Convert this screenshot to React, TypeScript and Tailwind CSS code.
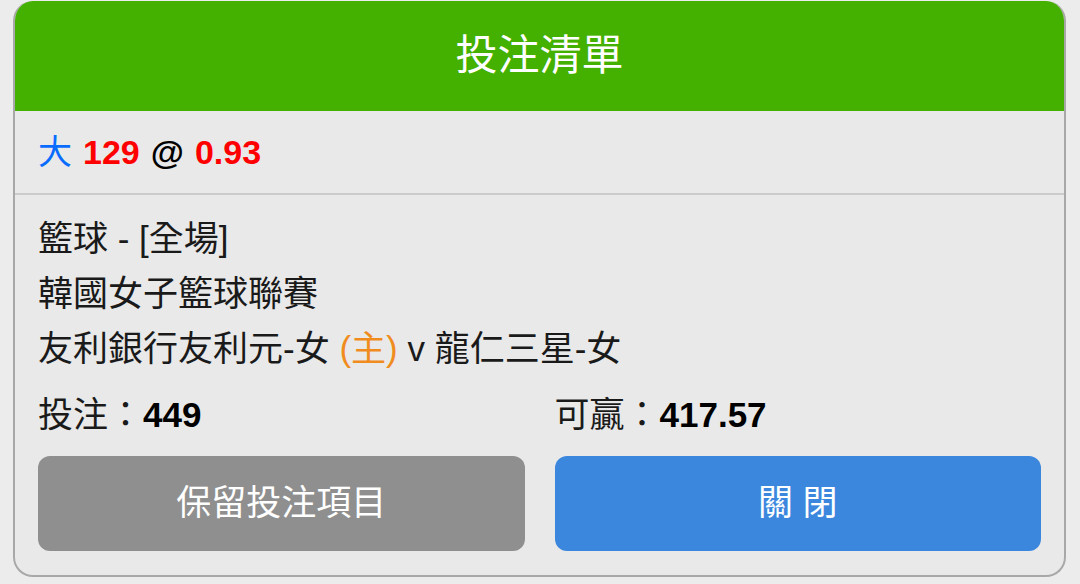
const font = { fontFamily: '"Liberation Sans", "Noto Sans CJK TC", sans-serif' };

export default function App() {
  return (
    <div className="w-[1080px] h-[584px] bg-[#ececec] pt-[1px]" style={font}>
      <div className="ml-[13px] w-[1053px] rounded-[20px] overflow-hidden border-2 border-t-0 border-[#a8a8a8] bg-[#e9e9e9]">
        {/* header */}
        <div className="h-[110px] -mx-[2px] bg-[#44b000] flex items-center justify-center text-white text-[42px] leading-none">
          投注清單
        </div>

        {/* selection */}
        <div className="h-[84px] flex items-center px-[23px] text-[34px] leading-none border-b-2 border-[#cbcbcb]">
          <span className="text-[#0a6cff]">大</span>
          <span className="ml-[11px] font-bold text-[#ff0000]">129</span>
          <span className="ml-[11px] font-bold text-black">@</span>
          <span className="ml-[11px] font-bold text-[#ff0000]">0.93</span>
        </div>

        {/* details */}
        <div className="px-[23px] pt-[16px] pb-[24px] text-[35px] text-[#1a1a1a]">
          <div className="leading-[55px]">籃球 - [全場]</div>
          <div className="leading-[55px]">韓國女子籃球聯賽</div>
          <div className="leading-[55px]">
            友利銀行友利元-女 <span className="text-[#f08c1e]">(主)</span> v 龍仁三星-女
          </div>

          <div className="mt-[12px] grid grid-cols-2 gap-[30px] leading-[54px]">
            <div>
              投注：<span className="font-bold text-black">449</span>
            </div>
            <div>
              可贏：<span className="font-bold text-black">417.57</span>
            </div>
          </div>

          <div className="mt-[14px] grid grid-cols-2 gap-[30px]">
            <button className="h-[95px] rounded-[12px] bg-[#8f8f8f] text-white text-[35px]">
              保留投注項目
            </button>
            <button className="h-[95px] rounded-[12px] bg-[#3b87de] text-white text-[35px]">
              關 閉
            </button>
          </div>
        </div>
      </div>
    </div>
  );
}
